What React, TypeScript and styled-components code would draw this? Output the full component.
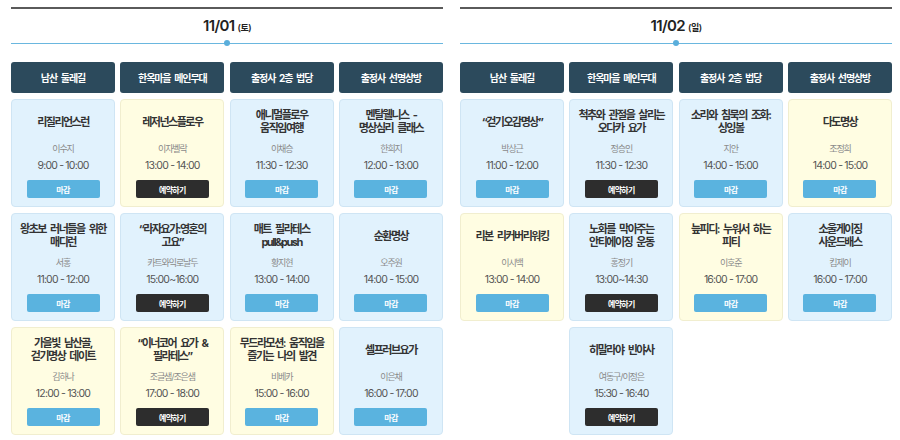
import React from "react";
import styled, { createGlobalStyle } from "styled-components";

const GlobalStyle = createGlobalStyle`
  html, body { margin: 0; padding: 0; background: #ffffff; }
  body { font-family: Inter, "Noto Sans CJK KR", sans-serif; color: #333; }
  * { box-sizing: border-box; }
`;

type Tone = "blue" | "yellow";
type Session = {
  title: string[];
  teacher: string;
  time: string;
  tone: Tone;
  open?: boolean;
};
type Column = { venue: string; sessions: Session[] };
type Day = { date: string; dow: string; columns: Column[] };

const days: Day[] = [
  {
    date: "11/01",
    dow: "(토)",
    columns: [
      {
        venue: "남산 둘레길",
        sessions: [
          { title: ["리질리언스런"], teacher: "이수지", time: "9:00 - 10:00", tone: "blue" },
          { title: ["왕초보 러너들을 위한", "매디런"], teacher: "서홍", time: "11:00 - 12:00", tone: "blue" },
          { title: ["가을빛 남산골,", "걷기명상 데이트"], teacher: "김하나", time: "12:00 - 13:00", tone: "yellow" },
        ],
      },
      {
        venue: "한옥마을 메인무대",
        sessions: [
          { title: ["레저넌스플로우"], teacher: "이자벨락", time: "13:00 - 14:00", tone: "yellow", open: true },
          { title: ["“라자요가:영혼의", "고요”"], teacher: "카트와익로날두", time: "15:00~16:00", tone: "blue", open: true },
          { title: ["“이너코어 요가 &", "필라테스”"], teacher: "조글샘/조은샘", time: "17:00 - 18:00", tone: "yellow", open: true },
        ],
      },
      {
        venue: "출정사 2층 법당",
        sessions: [
          { title: ["애니멀플로우", "움직임여행"], teacher: "이채승", time: "11:30 - 12:30", tone: "blue" },
          { title: ["매트 필라테스", "pull&push"], teacher: "황지현", time: "13:00 - 14:00", tone: "blue" },
          { title: ["무드라모션: 움직임을", "즐기는 나의 발견"], teacher: "비베카", time: "15:00 - 16:00", tone: "yellow" },
        ],
      },
      {
        venue: "출정사 선명상방",
        sessions: [
          { title: ["멘탈웰니스 -", "명상심리 클래스"], teacher: "한희지", time: "12:00 - 13:00", tone: "blue" },
          { title: ["순환명상"], teacher: "오주원", time: "14:00 - 15:00", tone: "blue" },
          { title: ["셀프러브요가"], teacher: "이은채", time: "16:00 - 17:00", tone: "blue" },
        ],
      },
    ],
  },
  {
    date: "11/02",
    dow: "(일)",
    columns: [
      {
        venue: "남산 둘레길",
        sessions: [
          { title: ["“걷기오감명상”"], teacher: "박상근", time: "11:00 - 12:00", tone: "blue" },
          { title: ["리본 리커버리워킹"], teacher: "이시백", time: "13:00 - 14:00", tone: "yellow" },
        ],
      },
      {
        venue: "한옥마을 메인무대",
        sessions: [
          { title: ["척추와 관절을 살리는", "오다카 요가"], teacher: "정승인", time: "11:30 - 12:30", tone: "blue", open: true },
          { title: ["노화를 막아주는", "안티에이징 운동"], teacher: "홍정기", time: "13:00~14:30", tone: "blue", open: true },
          { title: ["히말라야 빈야사"], teacher: "여동구/이정은", time: "15:30 - 16:40", tone: "blue", open: true },
        ],
      },
      {
        venue: "출정사 2층 법당",
        sessions: [
          { title: ["소리와 침묵의 조화:", "싱잉볼"], teacher: "지안", time: "14:00 - 15:00", tone: "blue" },
          { title: ["늪피디: 누워서 하는", "피티"], teacher: "이호준", time: "16:00 - 17:00", tone: "yellow" },
        ],
      },
      {
        venue: "출정사 선명상방",
        sessions: [
          { title: ["다도명상"], teacher: "조정희", time: "14:00 - 15:00", tone: "yellow" },
          { title: ["소울게이징", "사운드배스"], teacher: "킴제이", time: "16:00 - 17:00", tone: "blue" },
        ],
      },
    ],
  },
];

const Page = styled.div`
  display: flex;
  gap: 17px;
  padding: 7px 0 0 11px;
  width: 900px;
`;

const DayPanel = styled.section`
  width: 432px;
  display: flex;
  flex-direction: column;
`;

const TopRule = styled.div`
  height: 2px;
  background: #5a5a5a;
`;

const DateTitle = styled.h2`
  margin: 7px 0 0;
  height: 20px;
  line-height: 20px;
  text-align: center;
  font-family: Inter, "Noto Sans CJK KR", sans-serif;
  font-size: 15px;
  font-weight: 600;
  color: #222;
  letter-spacing: -0.6px;
`;

const Dow = styled.span`
  font-size: 9px;
  font-weight: 600;
  margin-left: 3px;
  letter-spacing: -0.5px;
`;

const Timeline = styled.div`
  position: relative;
  margin-top: 4px;
  height: 6px;
  display: flex;
  align-items: center;
  justify-content: center;
  &::before {
    content: "";
    position: absolute;
    left: 0;
    right: 0;
    top: 2.5px;
    height: 1px;
    background: #6ab7df;
  }
`;

const Dot = styled.span`
  position: relative;
  width: 6px;
  height: 6px;
  border-radius: 50%;
  background: #5aaedb;
`;

const Grid = styled.div`
  margin-top: 16px;
  display: grid;
  grid-template-columns: repeat(4, 1fr);
  column-gap: 5.3px;
  align-items: start;
`;

const ColumnStack = styled.div`
  display: flex;
  flex-direction: column;
  gap: 6px;
`;

const VenueHeader = styled.div`
  height: 31px;
  border-radius: 3px;
  background: #2c4a5c;
  color: #fff;
  display: flex;
  align-items: center;
  justify-content: center;
  font-family: Inter, "Noto Sans CJK KR", sans-serif;
  font-size: 10px;
  font-weight: 700;
  letter-spacing: -1.1px;
  word-spacing: 2.5px;
`;

const Card = styled.div<{ $tone: Tone }>`
  height: 108px;
  border-radius: 4px;
  padding-top: 9px;
  background: ${(p) => (p.$tone === "blue" ? "#e1f2fd" : "#fffde2")};
  border: 1px solid ${(p) => (p.$tone === "blue" ? "#cfe5f4" : "#f1eecf")};
  display: flex;
  flex-direction: column;
  align-items: center;
`;

const Title = styled.div`
  height: 26px;
  display: flex;
  flex-direction: column;
  justify-content: center;
  text-align: center;
  font-family: Inter, "Noto Sans CJK KR", sans-serif;
  font-size: 11px;
  line-height: 13px;
  font-weight: 700;
  color: #333;
  letter-spacing: -1.5px;
  word-spacing: 3px;
  white-space: nowrap;
`;

const Teacher = styled.div`
  margin-top: 6.5px;
  height: 13px;
  line-height: 13px;
  font-family: Inter, "Noto Sans CJK KR", sans-serif;
  font-size: 9px;
  color: #8a8a8a;
  letter-spacing: -1.1px;
`;

const Time = styled.div`
  margin-top: 4px;
  height: 14px;
  line-height: 14px;
  font-family: Inter, "Noto Sans CJK KR", sans-serif;
  font-size: 10.5px;
  color: #555;
  letter-spacing: -0.8px;
`;

const ActionButton = styled.button<{ $open?: boolean }>`
  margin-top: 7.5px;
  width: 73px;
  height: 18px;
  border: none;
  border-radius: 2px;
  padding: 0;
  background: ${(p) => (p.$open ? "#2d2d2d" : "#5ab3df")};
  color: #fff;
  font-family: Inter, "Noto Sans CJK KR", sans-serif;
  font-size: 8px;
  font-weight: 700;
  letter-spacing: -0.7px;
  cursor: pointer;
`;

function SessionCard({ s }: { s: Session }) {
  return (
    <Card $tone={s.tone}>
      <Title>
        {s.title.map((t, i) => (
          <span key={i}>{t}</span>
        ))}
      </Title>
      <Teacher>{s.teacher}</Teacher>
      <Time>{s.time}</Time>
      <ActionButton $open={s.open}>{s.open ? "예약하기" : "마감"}</ActionButton>
    </Card>
  );
}

export default function App() {
  return (
    <>
      <GlobalStyle />
      <Page>
        {days.map((d) => (
          <DayPanel key={d.date}>
            <TopRule />
            <DateTitle>
              {d.date}
              <Dow>{d.dow}</Dow>
            </DateTitle>
            <Timeline>
              <Dot />
            </Timeline>
            <Grid>
              {d.columns.map((c) => (
                <ColumnStack key={c.venue}>
                  <VenueHeader>{c.venue}</VenueHeader>
                  {c.sessions.map((s, i) => (
                    <SessionCard key={i} s={s} />
                  ))}
                </ColumnStack>
              ))}
            </Grid>
          </DayPanel>
        ))}
      </Page>
    </>
  );
}
